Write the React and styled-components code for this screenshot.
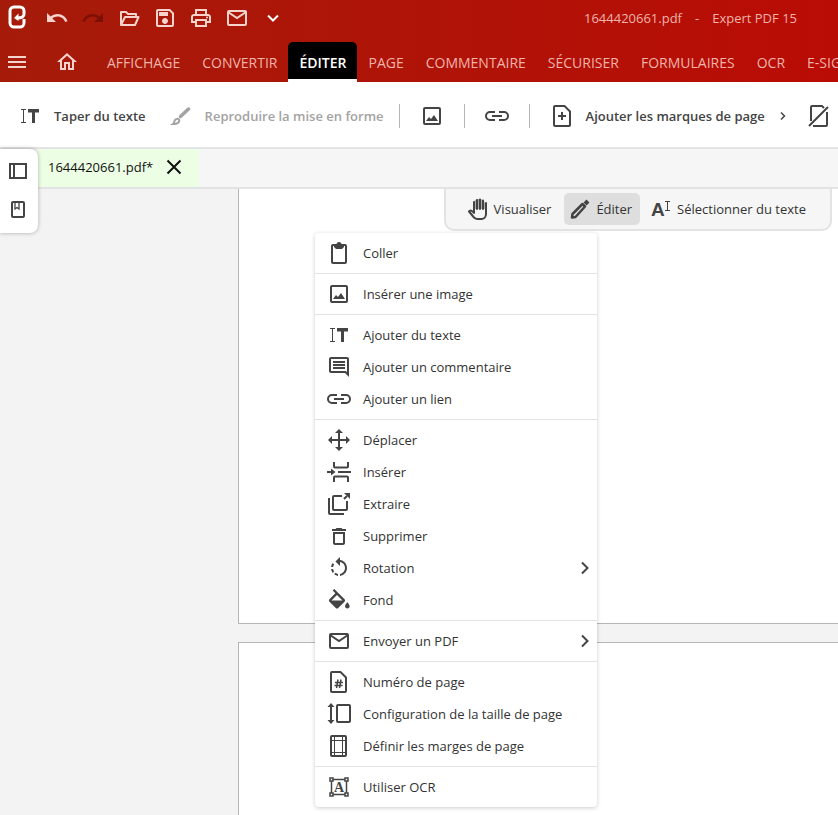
import styled, { createGlobalStyle } from "styled-components"

const UndoIcon = () => (
    <Svg>
        <path d="M12.5 8c-2.65 0-5.05.99-6.9 2.6L2 7v9h9l-3.62-3.62c1.39-1.16 3.16-1.88 5.12-1.88 3.54 0 6.55 2.31 7.6 5.5l2.37-.78C21.08 11.03 17.15 8 12.5 8z" />
    </Svg>
)

const RedoIcon = () => (
    <Svg>
        <path d="M18.4 10.6C16.55 8.99 14.15 8 11.5 8c-4.65 0-8.58 3.03-9.96 7.22L3.9 16c1.05-3.19 4.05-5.5 7.6-5.5 1.95 0 3.73.72 5.12 1.88L13 16h9V7l-3.6 3.6z" />
    </Svg>
)

const FolderIcon = () => (
    <Svg $line>
        <path d="M4 19V6h5l2 2h8v3M4 19l4-8h13.500l-3.500 8z" strokeLinejoin="round" />
    </Svg>
)

const SaveIcon = () => (
    <Svg>
        <path d="M17 3H5c-1.11 0-2 .9-2 2v14c0 1.1.89 2 2 2h14c1.1 0 2-.9 2-2V7l-4-4zm2 16H5V5h11.170L19 7.830V19zm-7-7c-1.660 0-3 1.340-3 3s1.340 3 3 3 3-1.340 3-3-1.340-3-3-3zM6 6h9v4H6z" />
    </Svg>
)

const PrintIcon = () => (
    <Svg>
        <path d="M19 8h-1V3H6v5H5c-1.660 0-3 1.340-3 3v6h4v4h12v-4h4v-6c0-1.660-1.340-3-3-3zM8 5h8v3H8V5zm8 12v2H8v-4h8v2zm2-2v-2H6v2H4v-4c0-.55.45-1 1-1h14c.55 0 1 .45 1 1v4h-2z" />
        <circle cx="18" cy="11.500" r="1" />
    </Svg>
)

const MailIcon = () => (
    <Svg $line>
        <rect x="3" y="5" width="18" height="14" rx="1" />
        <path d="M3 6l9 6 9-6" />
    </Svg>
)

const HomeIcon = () => (
    <Svg>
        <path d="M12 5.690l5 4.500V18h-2v-6H9v6H7v-7.810l5-4.500M12 3L2 12h3v8h6v-6h2v6h6v-8h3L12 3z" />
    </Svg>
)

const MenuIcon = () => (
    <Svg>
        <path d="M3 6h18v2H3zM3 11h18v2H3zM3 16h18v2H3z" />
    </Svg>
)

const ChevronDown = () => (
    <Svg $line>
        <path d="M7 9.500l5 5 5-5" />
    </Svg>
)

const ChevronRight = () => (
    <Svg $line>
        <path d="M9 6.500l5.500 5.500-5.500 5.500" />
    </Svg>
)

const SmallChevron = () => (
    <Svg $line>
        <path d="M10 8.500l3.500 3.500-3.500 3.500" strokeWidth="1.500" />
    </Svg>
)

const CloseIcon = () => (
    <Svg $line>
        <path d="M5.500 5.500l13 13M18.500 5.500l-13 13" />
    </Svg>
)

const TypeIcon = () => (
    <Svg>
        <path d="M3 5h5v1H6v12h2v1H3v-1h2V6H3z" />
        <path d="M10 5h11v3.500h-4V19h-3V8.500h-4z" />
    </Svg>
)

const BrushIcon = () => (
    <Svg $line>
        <path d="M19.500 5l-8 7.500" strokeWidth="3.500" strokeLinecap="round" />
        <path d="M9.500 15c1.500 1.500 1 5-5.500 5 1.500-1 1-1.500 1.500-3s2.500-3 4-2z" />
    </Svg>
)

const ImageIcon = () => (
    <Svg $line>
        <rect x="4" y="4" width="16" height="16" rx="1" />
        <path d="M6 17l3-4 2 2 3-4 4 6z" fill="currentColor" stroke="none" />
    </Svg>
)

const LinkIcon = () => (
    <Svg $line>
        <path d="M10 8H5a4 4 0 0 0 0 8h5M14 8h5a4 4 0 0 1 0 8h-5M7 12h10" />
    </Svg>
)

const AddPageIcon = () => (
    <Svg $line>
        <path d="M5 2h9.500L20 7.500V21a1 1 0 0 1-1 1H5a1 1 0 0 1-1-1V3a1 1 0 0 1 1-1zM12 8v8M8 12h8" />
    </Svg>
)

const NoPageIcon = () => (
    <Svg $line>
        <path d="M4 17V3a1 1 0 0 1 1-1h10l2 2M20 8v13a1 1 0 0 1-1 1H6M2 22L21 3" />
    </Svg>
)

const PanelIcon = () => (
    <Svg $line>
        <path d="M4 5h16v14H4zM8 5v14" />
    </Svg>
)

const BookmarkIcon = () => (
    <Svg $line>
        <rect x="6" y="4" width="12" height="15" rx="1" />
        <path d="M9 4v7l2-1.500 2 1.500V4" strokeWidth="1.300" />
    </Svg>
)

const HandIcon = () => (
    <Svg $line>
        <path d="M8 12V4l3-2h4l3 2 1 2v6z" fill="currentColor" fillOpacity="0.4" stroke="none" />
        <path
            d="M8 16V5M11 12V3M14 12V2.500M17 12V3.500M20 6v11c0 3-2 5-4.500 5h-4c-1.500 0-2.500-.5-3.500-1.500L3 14.500c1-1.800 3-1 5 1.500"
            strokeLinejoin="round"
            strokeLinecap="round"
        />
    </Svg>
)

const PencilIcon = () => (
    <Svg $line>
        <path d="M4 20.500l.5-3.500L14.500 7l2.500 2.500L7.500 20z" strokeWidth="2.500" strokeLinejoin="round" />
        <path d="M17 4l3 3" strokeWidth="4" />
    </Svg>
)

const SelectTextIcon = () => (
    <Svg>
        <text x="2" y="19" fontFamily="Liberation Sans" fontWeight="700" fontSize="19">A</text>
        <path d="M16 4h5v1h-2v8h2v1h-5v-1h2V5h-2z" />
    </Svg>
)

const PasteIcon = () => (
    <Svg $line>
        <rect x="5" y="4" width="14" height="18" rx="1" />
        <path d="M7 4h3a2 2 0 0 1 4 0h3v2l-2 2H9L7 6z" fill="currentColor" stroke="none" />
        <circle cx="12" cy="3.500" r="1.500" />
    </Svg>
)

const CommentIcon = () => (
    <Svg>
        <path d="M21.990 4c0-1.100-.89-2-1.990-2H4c-1.100 0-2 .9-2 2v12c0 1.100.9 2 2 2h14l4 4-.01-18zM20 4v13.170L18.830 16H4V4h16zM6 12h12v2H6zm0-3h12v2H6zm0-3h12v2H6z" />
    </Svg>
)

const MoveIcon = () => (
    <Svg>
        <path d="M11 4h2v7h7v2h-7v7h-2v-7H4v-2h7z" />
        <path d="M12 1l4 4H8zM12 23l4-4H8zM1 12l4-4v8zM23 12l-4-4v8z" />
    </Svg>
)

const InsertIcon = () => (
    <Svg $line>
        <path d="M7 2v4.500a1 1 0 0 0 1 1h12a1 1 0 0 0 1-1V2M7 22v-4.500a1 1 0 0 1 1-1h12a1 1 0 0 1 1 1V22M11 12h13M0 12h5" />
        <path d="M4 8.500l4.500 3.500L4 15.500z" fill="currentColor" stroke="none" />
    </Svg>
)

const ExtractIcon = () => (
    <Svg $line>
        <path d="M2 6v15a1 1 0 0 0 1 1h14M15 4H7a1 1 0 0 0-1 1v12a1 1 0 0 0 1 1h12a1 1 0 0 0 1-1V9M17 7l3-3" />
        <path d="M17 1h6v6z" fill="currentColor" stroke="none" />
    </Svg>
)

const TrashIcon = () => (
    <Svg>
        <path d="M6 19c0 1.100.9 2 2 2h8c1.100 0 2-.9 2-2V8H6v11zM8 10h8v9H8v-9zm7.500-5l-1-1h-5l-1 1H5v2h14V5z" />
    </Svg>
)

const RotateIcon = () => (
    <Svg>
        <path d="M7.110 8.530L5.700 7.110C4.800 8.270 4.240 9.610 4.070 11h2.020c.14-.87.49-1.720 1.020-2.470zM6.090 13H4.070c.17 1.390.72 2.730 1.620 3.890l1.410-1.420c-.52-.75-.87-1.590-1.010-2.470zm1.010 5.320c1.160.9 2.510 1.440 3.900 1.610V17.900c-.87-.15-1.710-.49-2.460-1.030L7.100 18.320zM13 4.070V1L8.450 5.550 13 10V6.090c2.840.48 5 2.940 5 5.910s-2.160 5.430-5 5.910v2.020c3.950-.49 7-3.850 7-7.930s-3.050-7.440-7-7.930z" />
    </Svg>
)

const FillIcon = () => (
    <Svg>
        <path
            transform="translate(-1.500 1) scale(1.150)"
            d="M16.560 8.940L7.620 0 6.210 1.410l2.380 2.380-5.150 5.150c-.59.59-.59 1.540 0 2.120l5.500 5.500c.29.29.68.44 1.060.44s.77-.15 1.060-.44l5.500-5.500c.59-.58.59-1.530 0-2.120zM5.210 10L10 5.210 14.790 10H5.210zM19 11.500s-2 2.170-2 3.500c0 1.100.9 2 2 2s2-.9 2-2c0-1.330-2-3.500-2-3.500z"
        />
    </Svg>
)

const NumberIcon = () => (
    <Svg $line>
        <path d="M5 2h8.500L19 7.500V21a1 1 0 0 1-1 1H5a1 1 0 0 1-1-1V3a1 1 0 0 1 1-1z" />
        <path d="M11 9.500L9.500 18M14 9.500L12.500 18M8 12.500h8M7.500 15.500h8" strokeWidth="1.500" />
    </Svg>
)

const SizeIcon = () => (
    <Svg $line>
        <rect x="10" y="3" width="13" height="17" rx="1" />
        <path d="M4 3v17" />
        <path d="M4 1l3.500 4h-7zM4 22l3.500-4h-7z" fill="currentColor" stroke="none" />
    </Svg>
)

const MarginsIcon = () => (
    <Svg $line>
        <rect x="4" y="2" width="15" height="20" rx="1" />
        <path d="M7.500 2v20M15.500 2v20M4 6.500h15M4 18.500h15" strokeWidth="1" />
    </Svg>
)

const OcrIcon = () => (
    <Svg $line>
        <path d="M3 3h3v3H3zM18 3h3v3h-3zM3 18h3v3H3zM18 18h3v3h-3zM6 4.500h12M6 19.500h12M4.500 6v12M19.500 6v12" strokeWidth="1.500" />
        <text x="12" y="17" textAnchor="middle" fontFamily="Liberation Serif" fontWeight="700" fontSize="14" fill="currentColor" stroke="none">A</text>
    </Svg>
)

const Logo = () => (
    <LogoSvg viewBox="0 0 18 24" aria-hidden="true">
        <path d="M9 12c4 0 7-1 7-4V5a4 4 0 0 0-4-4H6a4 4 0 0 0-4 4v12a4 4 0 0 0 4 4h6a4 4 0 0 0 4-4v-4" />
        <path d="M6 12l4.500-4.500v7.500z" fill="#fff" stroke="none" />
    </LogoSvg>
)

const quickActions = [
    { label: "Annuler", icon: UndoIcon },
    { label: "Rétablir", icon: RedoIcon, disabled: true },
    { label: "Ouvrir", icon: FolderIcon },
    { label: "Enregistrer", icon: SaveIcon },
    { label: "Imprimer", icon: PrintIcon },
    { label: "Envoyer", icon: MailIcon },
    { label: "Plus", icon: ChevronDown },
]

const ribbonTabs = [
    "AFFICHAGE",
    "CONVERTIR",
    "ÉDITER",
    "PAGE",
    "COMMENTAIRE",
    "SÉCURISER",
    "FORMULAIRES",
    "OCR",
    "E-SIGN",
]

const menuGroups = [
    [{ label: "Coller", icon: PasteIcon }],
    [{ label: "Insérer une image", icon: ImageIcon }],
    [
        { label: "Ajouter du texte", icon: TypeIcon },
        { label: "Ajouter un commentaire", icon: CommentIcon },
        { label: "Ajouter un lien", icon: LinkIcon },
    ],
    [
        { label: "Déplacer", icon: MoveIcon },
        { label: "Insérer", icon: InsertIcon },
        { label: "Extraire", icon: ExtractIcon },
        { label: "Supprimer", icon: TrashIcon },
        { label: "Rotation", icon: RotateIcon, submenu: true },
        { label: "Fond", icon: FillIcon },
    ],
    [{ label: "Envoyer un PDF", icon: MailIcon, submenu: true }],
    [
        { label: "Numéro de page", icon: NumberIcon },
        { label: "Configuration de la taille de page", icon: SizeIcon },
        { label: "Définir les marges de page", icon: MarginsIcon },
    ],
    [{ label: "Utiliser OCR", icon: OcrIcon }],
]

const Header = () => (
    <HeaderWrapper>
        <TitleBar>
            <Logo />
            <QuickBar>
                {quickActions.map(({ label, icon: Icon, disabled }) => (
                    <QuickButton key={label} aria-label={label} disabled={disabled}>
                        <Icon />
                    </QuickButton>
                ))}
            </QuickBar>
            <Title>
                <span>1644420661.pdf</span>
                <span>-</span>
                <span>Expert PDF 15</span>
            </Title>
        </TitleBar>

        <Nav>
            <NavIcon aria-label="Menu">
                <MenuIcon />
            </NavIcon>
            <NavIcon aria-label="Accueil">
                <HomeIcon />
            </NavIcon>
            <Tabs>
                {ribbonTabs.map((tab) => (
                    <Tab key={tab} $active={tab === "ÉDITER"}>
                        {tab}
                    </Tab>
                ))}
            </Tabs>
        </Nav>
    </HeaderWrapper>
)

const Ribbon = () => (
    <RibbonBar>
        <RibbonButton>
            <TypeIcon />
            Taper du texte
        </RibbonButton>
        <RibbonButton disabled>
            <BrushIcon />
            Reproduire la mise en forme
        </RibbonButton>
        <Divider />
        <RibbonIcon aria-label="Image">
            <ImageIcon />
        </RibbonIcon>
        <Divider />
        <RibbonIcon aria-label="Lien">
            <LinkIcon />
        </RibbonIcon>
        <Divider />
        <PageMarks>
            <RibbonButton $split>
                <AddPageIcon />
                Ajouter les marques de page
            </RibbonButton>
            <RibbonIcon $narrow aria-label="Options">
                <SmallChevron />
            </RibbonIcon>
            <RibbonIcon $narrow aria-label="Supprimer les marques">
                <NoPageIcon />
            </RibbonIcon>
        </PageMarks>
    </RibbonBar>
)

const ContextMenu = () => (
    <Menu>
        {menuGroups.map((group) => (
            <MenuGroup key={group[0].label}>
                {group.map(({ label, icon: Icon, submenu }) => (
                    <MenuItem key={label}>
                        <Icon />
                        <MenuLabel>{label}</MenuLabel>
                        {submenu && <ChevronRight />}
                    </MenuItem>
                ))}
            </MenuGroup>
        ))}
    </Menu>
)

const App = () => {
    return (
        <Wrapper>
            <GlobalStyle />
            <Header />
            <Ribbon />

            <Body>
                <FileTabs>
                    <FileTab>
                        1644420661.pdf*
                        <CloseButton aria-label="Fermer">
                            <CloseIcon />
                        </CloseButton>
                    </FileTab>
                </FileTabs>

                <Workspace>
                    <Page />
                    <Page $last />

                    <ModeBar>
                        <ModeButton>
                            <HandIcon />
                            Visualiser
                        </ModeButton>
                        <ModeButton $active>
                            <PencilIcon />
                            Éditer
                        </ModeButton>
                        <ModeButton>
                            <SelectTextIcon />
                            Sélectionner du texte
                        </ModeButton>
                    </ModeBar>

                    <ContextMenu />
                </Workspace>

                <SidePanel>
                    <SideButton aria-label="Panneau">
                        <PanelIcon />
                    </SideButton>
                    <SideButton aria-label="Signets">
                        <BookmarkIcon />
                    </SideButton>
                </SidePanel>
            </Body>
        </Wrapper>
    )
}

export default App

const GlobalStyle = createGlobalStyle`
    * {
        box-sizing: border-box;
    }

    body {
        margin: 0;
        color: #333;
        font-family: "Open Sans", "Noto Sans", sans-serif;
        font-size: 13px;
    }

    button {
        display: flex;
        flex: none;
        align-items: center;
        padding: 0;
        border: 0;
        background: none;
        color: inherit;
        font: inherit;
        white-space: nowrap;
        cursor: pointer;
    }
`

const Svg = styled.svg.attrs({ viewBox: "0 0 24 24", "aria-hidden": true })`
    width: 24px;
    height: 24px;
    flex: none;
    fill: ${({ $line }) => ($line ? "none" : "currentColor")};
    stroke: ${({ $line }) => ($line ? "currentColor" : "none")};
    stroke-width: 2;
`

const LogoSvg = styled.svg`
    width: 18px;
    height: 24px;
    overflow: visible;
    fill: none;
    stroke: #fff;
    stroke-width: 3;
`

const Wrapper = styled.div`
    display: flex;
    flex-direction: column;
    min-height: 100vh;
    overflow: hidden;
`

const HeaderWrapper = styled.header`
    background: linear-gradient(90deg, #a51b09, #b90c05);
    color: #f7d3cd;
`

const TitleBar = styled.div`
    display: flex;
    align-items: center;
    height: 36px;
    padding: 0 41px 0 8px;
`

const QuickBar = styled.div`
    display: flex;
    margin-left: 13px;
`

const QuickButton = styled.button`
    justify-content: center;
    width: 36px;
    height: 36px;

    &:disabled {
        color: #7c1005;
    }

    &:last-child {
        color: #fff;
    }
`

const Title = styled.div`
    display: flex;
    gap: 13px;
    margin-left: auto;
    color: #efb3ab;
`

const Nav = styled.nav`
    display: flex;
    align-items: center;
    gap: 26px;
    height: 46px;
    padding: 6px 0 0 5px;
`

const NavIcon = styled.button`
    width: 24px;
`

const Tabs = styled.div`
    display: flex;
    flex: 1;
    align-self: stretch;
    margin-left: -9px;
    overflow: hidden;
`

const Tab = styled.button`
    padding: 3px 11px 0;
    border-bottom: 3px solid ${({ $active }) => ($active ? "#fff" : "transparent")};
    border-radius: 5px 5px 0 0;
    background: ${({ $active }) => ($active ? "#000" : "none")};
    color: ${({ $active }) => ($active ? "#fff" : "#efb3ab")};
    font-size: 14px;
    font-weight: ${({ $active }) => ($active ? 600 : 400)};
`

const RibbonBar = styled.div`
    display: flex;
    align-items: center;
    height: 67px;
    padding: 2px 0 0 10px;
    border-bottom: 2px solid #e3e3e3;
    background: #fff;
    overflow: hidden;
`

const RibbonButton = styled.button`
    gap: 12px;
    padding: 0 ${({ $split }) => ($split ? "0" : "15px")} 0 8px;
    color: #444;
    font-weight: 600;

    &:disabled {
        color: #a3a3a3;
    }
`

const RibbonIcon = styled.button`
    padding: 0 ${({ $narrow }) => ($narrow ? "6px" : "20px")};
    color: #444;
`

const PageMarks = styled.div`
    display: flex;
    padding-left: 12px;
`

const Divider = styled.div`
    flex: none;
    width: 1px;
    height: 24px;
    background: #b5b5b5;
`

const Body = styled.div`
    position: relative;
    display: flex;
    flex: 1;
    flex-direction: column;
`

const FileTabs = styled.div`
    height: 40px;
    padding-left: 38px;
    border-bottom: 2px solid #e3e3e3;
    background: #f6f6f6;
`

const FileTab = styled.div`
    display: inline-flex;
    align-items: center;
    gap: 9px;
    height: 38px;
    padding: 0 13px 2px 10px;
    background: #ecfee3;
    color: #111;
`

const CloseButton = styled.button`
    color: #111;
`

const Workspace = styled.main`
    position: relative;
    display: flex;
    flex: 1;
    flex-direction: column;
    gap: 18px;
    padding-left: 238px;
    background: #f3f3f3;
`

const Page = styled.div`
    flex: ${({ $last }) => ($last ? "1" : "none")};
    height: ${({ $last }) => ($last ? "auto" : "435px")};
    border: 1px solid #b5b5b5;
    border-width: ${({ $last }) => ($last ? "1px 0 0 1px" : "0 0 1px 1px")};
    background: #fff;
`

const ModeBar = styled.div`
    position: absolute;
    top: -2px;
    right: 6px;
    display: flex;
    gap: 5px;
    padding: 4px 16px;
    border: 2px solid #e3e3e3;
    border-radius: 0 0 10px 10px;
    background: #f6f6f6;
`

const ModeButton = styled.button`
    gap: 4px;
    height: 32px;
    padding: 0 8px 0 4px;
    border-radius: 5px;
    background: ${({ $active }) => ($active ? "#dedede" : "none")};

    svg {
        color: #444;
    }
`

const SidePanel = styled.aside`
    position: absolute;
    top: 0;
    left: 0;
    display: flex;
    flex-direction: column;
    gap: 15px;
    width: 38px;
    height: 84px;
    padding: 10px 6px;
    border-radius: 0 8px 8px 0;
    background: #fff;
    box-shadow: 0 0 4px rgba(0, 0, 0, 0.3);
`

const SideButton = styled.button`
    color: #444;
`

const Menu = styled.div`
    position: absolute;
    top: 44px;
    left: 315px;
    width: 282px;
    border-radius: 4px;
    background: #fff;
    box-shadow: 0 1px 4px rgba(0, 0, 0, 0.2);
`

const MenuGroup = styled.div`
    padding: 4px 0;

    & + & {
        border-top: 1px solid #e3e3e3;
    }
`

const MenuItem = styled.button`
    gap: 12px;
    width: 100%;
    height: 32px;
    padding: 0 0 0 12px;

    svg {
        color: #444;
    }
`

const MenuLabel = styled.span`
    flex: 1;
    text-align: left;
`
